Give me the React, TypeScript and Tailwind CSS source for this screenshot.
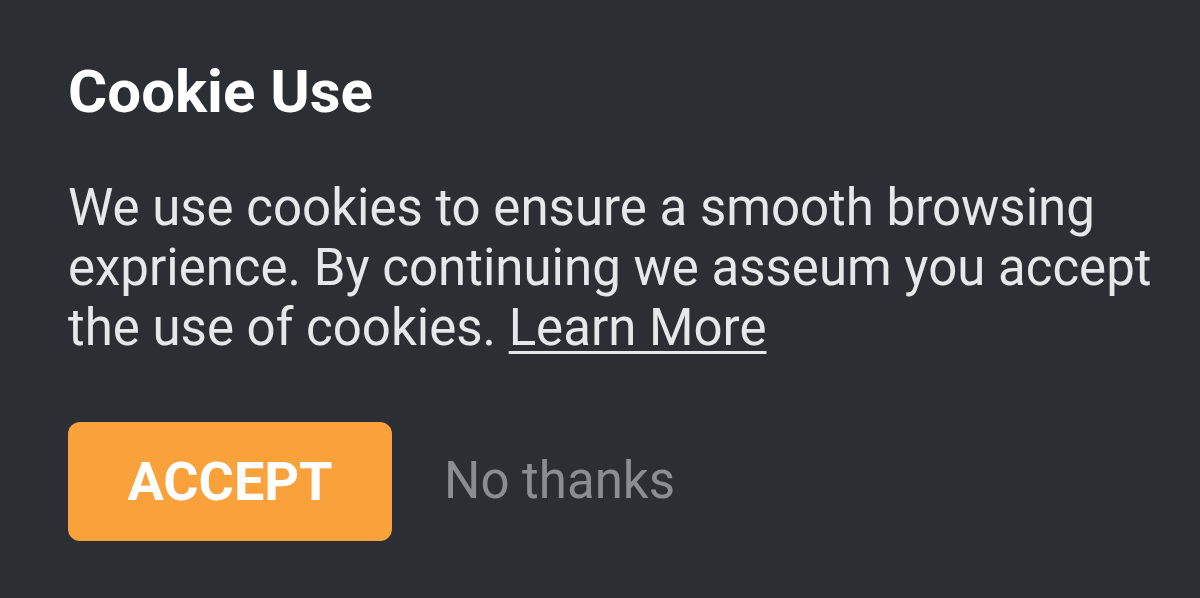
export default function App() {
  return (
    <div className="h-[598px] w-[1200px] overflow-hidden bg-[#2b2e32] font-['Roboto',sans-serif]">
      <div className="pl-[68px] pt-[57px]">
        <h1 className="text-[60px] font-bold leading-[70px] text-white">Cookie Use</h1>
        <p className="mt-[51px] w-[1120px] text-[51px] leading-[60px] text-[#e6e7e8]">
          We use cookies to ensure a smooth browsing exprience. By continuing we asseum you accept the
          use of cookies.{" "}
          <a href="#" className="underline underline-offset-[6px] decoration-[3px]">
            Learn More
          </a>
        </p>
        <div className="mt-[64px] flex items-center gap-[52px]">
          <button className="h-[119px] w-[324px] rounded-[12px] bg-[#f9a13a] text-[54px] font-bold text-white">
            ACCEPT
          </button>
          <button className="text-[51px] text-[#8b8e91]">No thanks</button>
        </div>
      </div>
    </div>
  );
}
